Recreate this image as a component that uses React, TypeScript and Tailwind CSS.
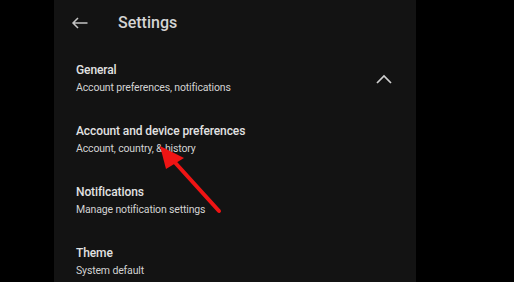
const rows = [
  { title: "General", sub: "Account preferences, notifications", open: true },
  { title: "Account and device preferences", sub: "Account, country, & history" },
  { title: "Notifications", sub: "Manage notification settings" },
  { title: "Theme", sub: "System default" },
];

export default function App() {
  return (
    <div className="relative flex h-[282px] w-[514px] overflow-hidden bg-black" style={{ fontFamily: "Roboto, 'Liberation Sans', sans-serif" }}>
      <div className="ml-[54px] h-full w-[362px] bg-[#131313]">
        {/* header */}
        <div className="flex h-[46px] items-center pl-[16px]">
          <svg width="24" height="24" viewBox="0 0 24 24" className="text-[#c4c4c4]">
            <path d="M17.5 12H2.8M8 7L3 12l5 5" fill="none" stroke="currentColor" strokeWidth="1.5" />
          </svg>
          <span className="ml-[24px] text-[16px] font-medium text-[#d4d4d4]">Settings</span>
        </div>

        <div className="pt-[16px]">
          {rows.map((r) => (
            <div key={r.title} className="flex h-[61px] items-start pl-[22px] pr-[22px]">
              <div className="flex flex-1 items-center justify-between">
                <div>
                  <div className="text-[12px] font-medium leading-[16px] tracking-[-0.1px] text-[#e2e2e2]">{r.title}</div>
                  <div className="mt-[2px] text-[10.5px] leading-[16px] tracking-[-0.15px] text-[#d2d2d2]">{r.sub}</div>
                </div>
                {r.open && (
                  <svg width="20" height="20" viewBox="0 0 20 20" className="text-[#d0d0d0]">
                    <path d="M3 14L10 7l7 7" fill="none" stroke="currentColor" strokeWidth="1.7" />
                  </svg>
                )}
              </div>
            </div>
          ))}
        </div>
      </div>

      {/* red annotation arrow */}
      <svg className="pointer-events-none absolute left-0 top-0" width="514" height="282">
        <line x1="219" y1="211" x2="170" y2="157" stroke="#ef1414" strokeWidth="4" strokeLinecap="round" />
        <polygon points="160,146 184,158 166,169" fill="#ef1414" />
      </svg>
    </div>
  );
}
